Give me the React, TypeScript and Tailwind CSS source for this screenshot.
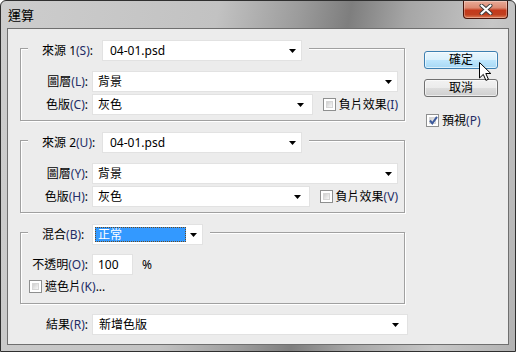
import React from "react";

function Arrow() {
  return (
    <svg width="7" height="4" viewBox="0 0 7 4" className="shrink-0">
      <path d="M0 0H7L3.5 4Z" fill="#000" />
    </svg>
  );
}

function Lbl({ main, k, colon = true }: { main: string; k: string; colon?: boolean }) {
  return (
    <span className="whitespace-nowrap">
      {main}
      <span className="text-[#232c66]">({k})</span>
      {colon ? ":" : ""}
    </span>
  );
}

function Check({ checked }: { checked?: boolean }) {
  return (
    <div className="w-[13px] h-[13px] shrink-0 border border-[#8e8f8f] bg-white p-[2px] relative">
      <div className="w-full h-full border border-[#d6d6d6] bg-[linear-gradient(135deg,#cfcfcf,#f8f8f8)]" />
      {checked && (
        <svg width="11" height="11" viewBox="0 0 11 11" className="absolute left-[1px] top-[0px]">
          <path d="M2 5.5L4.3 8.3L9 1.8" stroke="#3d5a9c" strokeWidth="2" fill="none" />
        </svg>
      )}
    </div>
  );
}

function Group({ h, children }: { h: string; children: React.ReactNode }) {
  return (
    <div
      className={`w-[385px] ${h} border border-[#a0a0a0] shadow-[1px_1px_0_#fff,inset_1px_1px_0_#fff] flex flex-col`}
    >
      {children}
    </div>
  );
}

function SourceGroup({
  n,
  sk,
  lk,
  ck,
  ik,
}: {
  n: string;
  sk: string;
  lk: string;
  ck: string;
  ik: string;
}) {
  return (
    <Group h="h-[73px]">
      <div className="-mt-[9px] ml-[7px] self-start bg-[#ececec] pl-[14px] pr-[7px] flex items-center h-[21px]">
        <div className="w-[60px]">
          <span className="whitespace-nowrap">
            來源 {n}
            <span className="text-[#232c66]">({sk})</span>:
          </span>
        </div>
        <div className="w-[200px] h-[21px] bg-white border border-[#e2e2e2] flex items-center justify-between pl-[7px] pr-[5px]">
          <span>04-01.psd</span>
          <Arrow />
        </div>
      </div>
      <div className="mt-[10px] flex items-center h-[21px] pr-[6px]">
        <div className="w-[67px] text-right mr-[4px]">
          <Lbl main="圖層" k={lk} />
        </div>
        <div className="flex-1 h-[21px] bg-white border border-[#e2e2e2] flex items-center justify-between pl-[5px] pr-[5px]">
          <span>背景</span>
          <Arrow />
        </div>
      </div>
      <div className="mt-[2px] flex items-center h-[21px] pr-[6px]">
        <div className="w-[67px] text-right mr-[4px]">
          <Lbl main="色版" k={ck} />
        </div>
        <div className="flex-1 h-[21px] bg-white border border-[#e2e2e2] flex items-center justify-between pl-[5px] pr-[8px]">
          <span>灰色</span>
          <Arrow />
        </div>
        <div className="ml-[10px] flex items-center">
          <Check />
          <span className="ml-[3px]">
            <Lbl main="負片效果" k={ik} colon={false} />
          </span>
        </div>
      </div>
    </Group>
  );
}

export default function App() {
  return (
    <div className="w-[516px] h-[352px] relative overflow-hidden bg-white font-['Noto_Sans','Noto_Sans_CJK_TC',sans-serif] text-[12px] leading-none text-black">
      <div className="w-full h-full flex flex-col rounded-t-[6px] border border-[#2f2f2f] bg-[linear-gradient(100deg,#cdcdcd_0%,#c2c2c2_38%,#9c9c9c_52%,#7e7e7e_61%,#a6a6a6_71%,#c7c7c7_86%,#b2b2b2_100%)]">
        {/* title bar */}
        <div className="h-[27px] shrink-0 flex items-start justify-between pl-[7px] pr-[7px]">
          <span className="mt-[8px] text-[13px]">運算</span>
          <div className="w-[45px] h-[18px] rounded-b-[4px] border border-t-0 border-[#47140a] bg-[linear-gradient(180deg,#e9ab98_0%,#dc8a72_40%,#c4391b_55%,#c0401f_80%,#de7e58_100%)] shadow-[inset_0_0_0_1px_rgba(255,255,255,0.3)] flex items-center justify-center">
            <svg width="16" height="11" viewBox="0 0 16 11">
              <path d="M3.5 1.5L12.5 9.5M12.5 1.5L3.5 9.5" stroke="#3a3a3a" strokeWidth="4" strokeLinecap="round" />
              <path d="M3.5 1.5L12.5 9.5M12.5 1.5L3.5 9.5" stroke="#fff" strokeWidth="2.2" strokeLinecap="round" />
            </svg>
          </div>
        </div>
        {/* body */}
        <div className="flex-1 flex px-[6px] pb-[6px]">
          <div className="flex-1 border border-[#6f6f6f] bg-[#ececec] flex">
            {/* left column */}
            <div className="w-[400px] pl-[12px] flex flex-col">
              <div className="mt-[19px]">
                <SourceGroup n="1" sk="S" lk="L" ck="C" ik="I" />
              </div>
              <div className="mt-[19px]">
                <SourceGroup n="2" sk="U" lk="Y" ck="H" ik="V" />
              </div>
              <div className="mt-[19px]">
                <Group h="h-[72px]">
                  <div className="-mt-[9px] ml-[7px] self-start bg-[#ececec] pl-[14px] pr-[7px] flex items-center h-[21px]">
                    <div className="w-[50px]">
                      <Lbl main="混合" k="B" />
                    </div>
                    <div className="w-[111px] h-[21px] bg-white border border-[#e2e2e2] flex items-center pl-[2px] pr-[5px]">
                      <div className="w-[91px] h-[15px] bg-[#3399ff] border border-dotted border-[#6b4a1e] text-white flex items-center pl-[2px]">
                        正常
                      </div>
                      <div className="flex-1 flex justify-end">
                        <Arrow />
                      </div>
                    </div>
                  </div>
                  <div className="mt-[9px] flex items-center h-[21px]">
                    <div className="w-[67px] text-right mr-[4px]">
                      <Lbl main="不透明" k="O" />
                    </div>
                    <div className="w-[41px] h-[21px] bg-white border border-[#e2e2e2] flex items-center pl-[5px]">
                      100
                    </div>
                    <span className="ml-[9px]">%</span>
                  </div>
                  <div className="mt-[5px] flex items-center pl-[8px]">
                    <Check />
                    <span className="ml-[3px] whitespace-nowrap">
                      遮色片<span className="text-[#232c66]">(K)</span>...
                    </span>
                  </div>
                </Group>
              </div>
              <div className="mt-[10px] flex items-center h-[21px]">
                <div className="w-[68px] text-right mr-[4px]">
                  <Lbl main="結果" k="R" />
                </div>
                <div className="w-[316px] h-[21px] bg-white border border-[#e2e2e2] flex items-center justify-between pl-[6px] pr-[8px]">
                  <span>新增色版</span>
                  <Arrow />
                </div>
              </div>
            </div>
            {/* right column */}
            <div className="ml-[16px] pt-[22px] flex flex-col">
              <div className="w-[74px] h-[18px] rounded-[3px] border border-[#3c7fb1] bg-[linear-gradient(180deg,#eaf6fd_0%,#d9f0fc_50%,#bee6fd_51%,#a7d9f5_100%)] shadow-[inset_0_0_0_1px_rgba(255,255,255,0.6)] flex items-center justify-center">
                確定
              </div>
              <div className="mt-[10px] w-[74px] h-[18px] rounded-[3px] border border-[#707070] bg-[linear-gradient(180deg,#f2f2f2_0%,#ebebeb_50%,#dddddd_51%,#cfcfcf_100%)] shadow-[inset_0_0_0_1px_rgba(255,255,255,0.6)] flex items-center justify-center">
                取消
              </div>
              <div className="mt-[17px] ml-[2px] flex items-center">
                <Check checked />
                <span className="ml-[3px]">
                  <Lbl main="預視" k="P" colon={false} />
                </span>
              </div>
            </div>
          </div>
        </div>
      </div>
      {/* mouse cursor */}
      <svg width="13" height="20" viewBox="0 0 13 20" className="absolute left-[479px] top-[62px]">
        <path d="M0.5 0.5V16L4.3 12.4L6.9 18.4L9.4 17.3L6.8 11.5H11.8Z" fill="#fff" stroke="#000" strokeWidth="1" strokeLinejoin="round" />
      </svg>
    </div>
  );
}
